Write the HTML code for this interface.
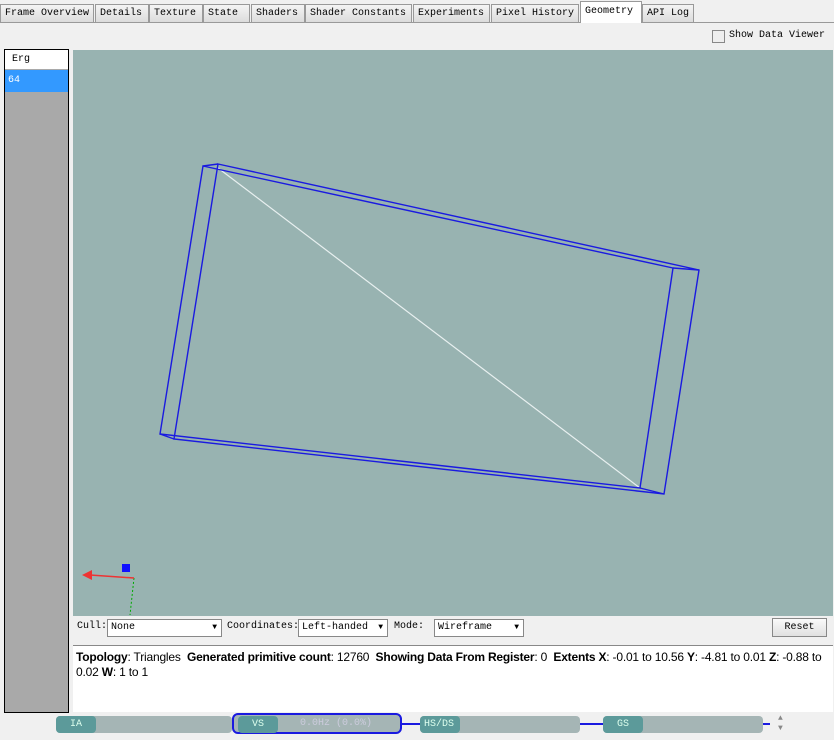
<!DOCTYPE html>
<html><head><style>
body{margin:0;width:834px;height:740px;background:#f0f0f0;position:relative;overflow:hidden;font-family:"Liberation Mono","Noto Sans CJK SC",monospace;font-size:10px;white-space:nowrap}
.tabs{position:absolute;left:0;top:3px;height:19px;width:834px;border-bottom:1px solid #999}
.tab{position:absolute;top:1px;height:18px;background:linear-gradient(#f4f4f4,#dcdcdc);border:1px solid #999;border-bottom:none;line-height:18px;padding-left:4px;box-sizing:border-box;color:#000;overflow:hidden}
.tab.act{background:#fff;top:-2px;height:22px;line-height:20px}
.abs{position:absolute}
.sel{position:absolute;top:619px;height:18px;background:#fff;border:1px solid #888;box-sizing:border-box;line-height:16px;padding-left:3px}
.sel:after{content:"▼";position:absolute;right:4px;top:0;font-size:8px}
.stage{position:absolute;top:716px;height:17px;background:#a5b5b5;border-radius:4px}
.lab{position:absolute;top:0;height:17px;background:#5c9a9a;border-radius:4px;color:#dfe;line-height:17px;padding-left:14px;box-sizing:border-box}
</style></head><body>
<div class="tabs">
<div class="tab" style="left:0;width:94px">Frame Overview</div>
<div class="tab" style="left:95px;width:54px">Details</div>
<div class="tab" style="left:149px;width:54px">Texture</div>
<div class="tab" style="left:203px;width:47px">State</div>
<div class="tab" style="left:251px;width:54px">Shaders</div>
<div class="tab" style="left:305px;width:107px">Shader Constants</div>
<div class="tab" style="left:413px;width:77px">Experiments</div>
<div class="tab" style="left:491px;width:88px">Pixel History</div>
<div class="tab act" style="left:580px;width:62px">Geometry</div>
<div class="tab" style="left:642px;width:52px">API Log</div>
</div>
<div class="abs" style="left:712px;top:30px;width:11px;height:11px;border:1px solid #888;background:#eee"></div>
<div class="abs" style="left:729px;top:30px">Show Data Viewer</div>
<div class="abs" style="left:4px;top:49px;width:63px;height:662px;border:1px solid #000;background:#a9a9a9"></div>
<div class="abs" style="left:5px;top:50px;width:63px;height:19px;background:#fff;line-height:20px;padding-left:7px;box-sizing:border-box">Erg</div>
<div class="abs" style="left:5px;top:70px;width:63px;height:22px;background:#3399ff;color:#fff;line-height:22px;padding-left:3px;box-sizing:border-box">64</div>
<svg class="abs" style="left:73px;top:50px" width="760" height="566">
<rect width="760" height="566" fill="#98b3b1"/>
<g transform="translate(-73,-50)" fill="none" stroke="#1a1ae0" stroke-width="1.4">
<line x1="218" y1="168" x2="640" y2="488" stroke="#e8f0f0" stroke-width="1.2"/>
<polygon points="203,166 673,268 640,488 160,434"/>
<polygon points="218,164 699,270 664,494 174,439"/>
<line x1="203" y1="166" x2="218" y2="164"/><line x1="673" y1="268" x2="699" y2="270"/>
<line x1="640" y1="488" x2="664" y2="494"/><line x1="160" y1="434" x2="174" y2="439"/>
<line x1="134" y1="578" x2="130" y2="615" stroke="#0a0" stroke-dasharray="2,2" stroke-width="1"/>
<line x1="134" y1="578" x2="90" y2="575" stroke="#e33" stroke-width="1.5"/>
<polygon points="82,575 92,570 92,580" fill="#e33" stroke="none"/>
<rect x="122" y="564" width="8" height="8" fill="#1010ff" stroke="none"/>
</g></svg>
<div class="abs" style="left:77px;top:621px">Cull:</div>
<div class="sel" style="left:107px;width:115px">None</div>
<div class="abs" style="left:227px;top:621px">Coordinates:</div>
<div class="sel" style="left:298px;width:90px">Left-handed</div>
<div class="abs" style="left:394px;top:621px">Mode:</div>
<div class="sel" style="left:434px;width:90px">Wireframe</div>
<div class="abs" style="left:772px;top:618px;width:55px;height:19px;border:1px solid #888;background:linear-gradient(#fafafa,#e0e0e0);text-align:center;line-height:18px;box-sizing:border-box">Reset</div>
<div class="abs" style="left:73px;top:645px;width:760px;height:67px;background:#fff;border-top:1px solid #888;font-family:'Liberation Sans',sans-serif;font-size:12px;padding:4px 3px;box-sizing:border-box;letter-spacing:-0.2px;line-height:15px;white-space:normal"><b>Topology</b>: Triangles &nbsp;<b>Generated primitive count</b>: 12760 &nbsp;<b>Showing Data From Register</b>: 0 &nbsp;<b>Extents X</b>: -0.01 to 10.56 <b>Y</b>: -4.81 to 0.01 <b>Z</b>: -0.88 to 0.02 <b>W</b>: 1 to 1</div>
<div class="abs" style="left:130px;top:723px;width:640px;height:2px;background:#1a1ae0"></div>
<div class="stage" style="left:56px;width:176px"><div class="lab" style="width:40px">IA</div></div>
<div class="abs" style="left:232px;top:713px;width:170px;height:21px;border:2px solid #1a1ae0;border-radius:6px;background:#a5b5b5;box-sizing:border-box"></div>
<div class="stage" style="left:238px;width:160px;background:none"><div class="lab" style="width:40px">VS</div><span style="position:absolute;left:62px;top:2px;color:#ccd">0.0Hz (0.0%)</span></div>
<div class="stage" style="left:420px;width:160px"><div class="lab" style="width:40px;padding-left:4px">HS/DS</div></div>
<div class="stage" style="left:603px;width:160px"><div class="lab" style="width:40px">GS</div></div>
<div class="abs" style="left:778px;top:714px;font-size:8px;color:#888;line-height:10px">▲<br>▼</div>
</body></html>
